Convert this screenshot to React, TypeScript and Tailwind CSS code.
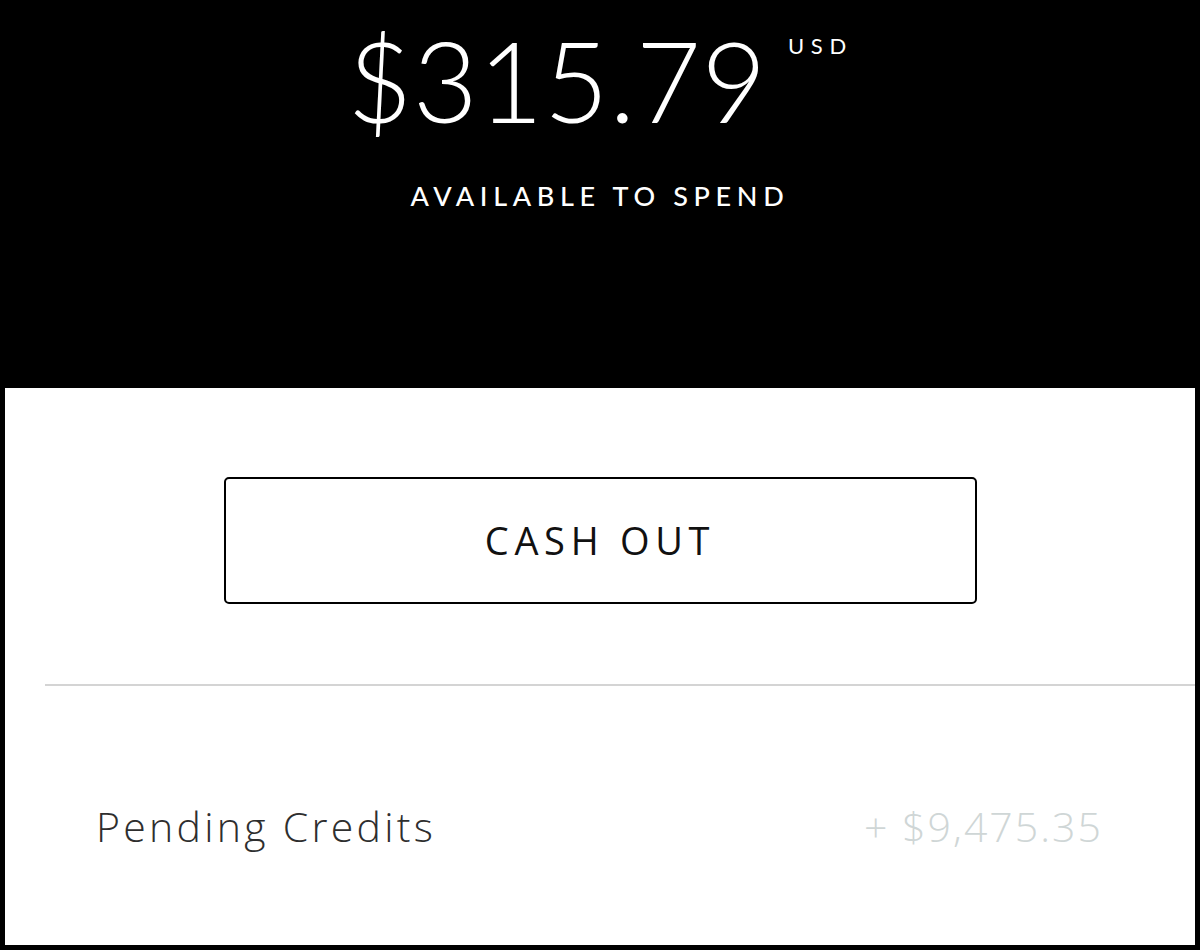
import React from 'react'

export default function App() {
  return (
    <div className="w-[1200px] h-[950px] bg-black flex flex-col overflow-hidden">
      {/* Balance header */}
      <div className="h-[388px] flex flex-col items-center pt-[24px]">
        <div className="flex items-start">
          <span className="text-[112px] leading-none font-light text-white font-['Lato',sans-serif] tracking-[0.005em]">
            $315.79
          </span>
          <span className="ml-[21px] mt-[11px] text-[22px] leading-none font-normal text-white font-['Lato',sans-serif] tracking-[0.3em]">
            USD
          </span>
        </div>
        <div className="mt-[46px] text-[27px] leading-none font-medium text-white tracking-[0.21em] font-['Lato',sans-serif]">
          AVAILABLE TO SPEND
        </div>
      </div>

      {/* Wallet panel */}
      <div className="mx-[5px] h-[557px] bg-white flex flex-col">
        <div className="flex justify-center pt-[89px]">
          <button className="w-[753px] h-[127px] border-2 border-black rounded-[5px] bg-white text-[38px] text-[#111] tracking-[0.15em] font-['Open_Sans',sans-serif]">
            CASH OUT
          </button>
        </div>
        <div className="ml-[40px] mt-[80px] border-t-2 border-[#d4d4d4]" />
        <div className="flex items-center justify-between pl-[91px] pr-[92px] mt-[110px]">
          <span className="text-[41px] font-light text-[#2e2e2e] tracking-[0.08em] font-['Open_Sans',sans-serif]">Pending Credits</span>
          <span className="text-[41px] font-light text-[#cfd6d6] tracking-[0.05em] font-['Open_Sans',sans-serif]">+ $9,475.35</span>
        </div>
      </div>
    </div>
  )
}
